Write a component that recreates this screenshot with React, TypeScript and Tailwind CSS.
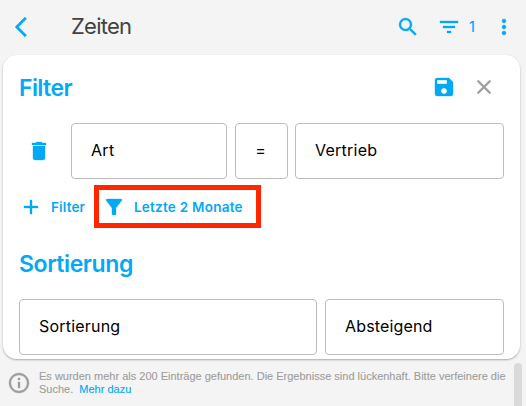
const icons = {
  back: 'M11.67 3.87L9.9 2.1 0 12l9.9 9.9 1.77-1.77L3.54 12z',
  search:
    'M15.5 14h-.79l-.28-.27A6.471 6.471 0 0 0 16 9.5 6.5 6.5 0 1 0 9.5 16c1.61 0 3.09-.59 4.23-1.57l.27.28v.79l5 4.99L20.49 19l-4.99-5zm-6 0C7.01 14 5 11.99 5 9.5S7.01 5 9.5 5 14 7.01 14 9.5 11.99 14 9.5 14z',
  list: 'M10 18h4v-2h-4v2zM3 6v2h18V6H3zm3 7h12v-2H6v2z',
  more: 'M12 8c1.1 0 2-.9 2-2s-.9-2-2-2-2 .9-2 2 .9 2 2 2zm0 2c-1.1 0-2 .9-2 2s.9 2 2 2 2-.9 2-2-.9-2-2-2zm0 6c-1.1 0-2 .9-2 2s.9 2 2 2 2-.9 2-2-.9-2-2-2z',
  save: 'M17 3H5a2 2 0 0 0-2 2v14a2 2 0 0 0 2 2h14c1.1 0 2-.9 2-2V7l-4-4zm-5 16c-1.66 0-3-1.34-3-3s1.34-3 3-3 3 1.34 3 3-1.34 3-3 3zm3-10H5V5h10v4z',
  close:
    'M19 6.41L17.59 5 12 10.59 6.41 5 5 6.41 10.59 12 5 17.59 6.41 19 12 13.41 17.59 19 19 17.59 13.41 12z',
  trash: 'M6 19c0 1.1.9 2 2 2h8c1.1 0 2-.9 2-2V7H6v12zM19 4h-3.5l-1-1h-5l-1 1H5v2h14V4z',
  plus: 'M19 13h-6v6h-2v-6H5v-2h6V5h2v6h6v2z',
  funnel:
    'M4.25 5.61C6.27 8.2 10 13 10 13v6c0 .55.45 1 1 1h2c.55 0 1-.45 1-1v-6s3.72-4.8 5.74-7.39A.998.998 0 0 0 18.95 4H5.04c-.83 0-1.3.95-.79 1.61z',
  info: 'M11 7h2v2h-2zm0 4h2v6h-2zm1-9C6.48 2 2 6.48 2 12s4.48 10 10 10 10-4.48 10-10S17.52 2 12 2zm0 18c-4.41 0-8-3.59-8-8s3.59-8 8-8 8 3.59 8 8-3.59 8-8 8z',
};

function Icon({ name, className = '' }: { name: keyof typeof icons; className?: string }) {
  return (
    <svg
      viewBox="0 0 24 24"
      fill="currentColor"
      stroke="currentColor"
      strokeWidth="0.35"
      className={`size-6 shrink-0 overflow-visible ${className}`}
    >
      <path d={icons[name]} />
    </svg>
  );
}

function Field({ text, className }: { text: string; className: string }) {
  return (
    <button
      className={`flex h-14 shrink-0 items-center rounded border border-[#bdbdbd] pb-0.5 text-left text-base text-black ${className}`}
    >
      {text}
    </button>
  );
}

export default function App() {
  return (
    <div className="flex h-[406px] w-[526px] flex-col overflow-hidden bg-[#f4f4f4] font-['Inter','Liberation_Sans',sans-serif] text-[#03a9f4]">
      <header className="flex h-[55px] shrink-0 items-center pr-2.5 pb-0.5 pl-[15px]">
        <Icon name="back" />
        <h1 className="ml-8 pb-0.5 text-[22px] leading-6 tracking-[-0.75px] text-[#424242]">Zeiten</h1>
        <div className="ml-auto flex items-center">
          <Icon name="search" />
          <Icon name="list" className="ml-[17px]" />
          <span className="ml-2 w-[23px] text-sm font-medium">1</span>
          <Icon name="more" />
        </div>
      </header>

      <main className="ml-[3px] h-[304px] w-[517px] shrink-0 rounded-[14px] bg-white px-4 pt-5 shadow-[0_1px_2px_rgba(0,0,0,0.3)]">
        <div className="flex h-6 items-center">
          <h2 className="pt-0.5 text-[23px] leading-6 font-semibold tracking-[-0.6px]">Filter</h2>
          <Icon name="save" className="ml-auto" />
          <Icon name="close" className="mr-2 ml-4 text-[#9e9e9e]" />
        </div>

        <div className="mt-6 flex items-center">
          <Icon name="trash" className="ml-2" />
          <Field text="Art" className="ml-5 w-[156px] pl-[19px] tracking-[0.3px]" />
          <Field text="=" className="ml-2 w-[53px] justify-center pr-1.5 pl-1" />
          <Field text="Vertrieb" className="ml-[7px] w-[209px] pl-[19px] tracking-[0.25px]" />
        </div>

        <div className="mt-1.5 flex h-[43px] items-center text-[13.5px] font-semibold">
          <Icon name="plus" />
          <span className="ml-2 w-[43px] pt-0.5 tracking-[0.15px]">Filter</span>
          <div className="flex h-[43px] w-[167px] items-center border-[5px] border-[#ff2600] pl-[3px]">
            <Icon name="funnel" />
            <span className="ml-2 pt-0.5 whitespace-nowrap tracking-[0.24px]">Letzte 2 Monate</span>
          </div>
        </div>

        <h2 className="mt-6 text-[23px] leading-6 font-semibold tracking-[-0.4px]">Sortierung</h2>
        <div className="mt-[23px] flex gap-2">
          <Field text="Sortierung" className="w-[298px] pl-[19px] tracking-[0.2px]" />
          <Field text="Absteigend" className="w-[179px] pl-[19px] tracking-[0.15px]" />
        </div>
      </main>

      <footer className="flex flex-1 items-start">
        <Icon name="info" className="mt-3 ml-[7px] text-[#9e9e9e]" />
        <p className="mt-[11px] ml-2 w-[475px] font-['Liberation_Sans',Arial,sans-serif] text-[11px] leading-[13px] whitespace-nowrap text-[#9e9e9e] [-webkit-text-stroke:0.12px]">
          Es wurden mehr als 200 Einträge gefunden. Die Ergebnisse sind lückenhaft. Bitte verfeinere die
          <br />
          Suche. <a className="ml-[3px] text-[#03a9f4]">Mehr dazu</a>
        </p>
        <div className="mt-1 h-12 w-2 rounded-t-full bg-[#dadada]" />
      </footer>
    </div>
  );
}
